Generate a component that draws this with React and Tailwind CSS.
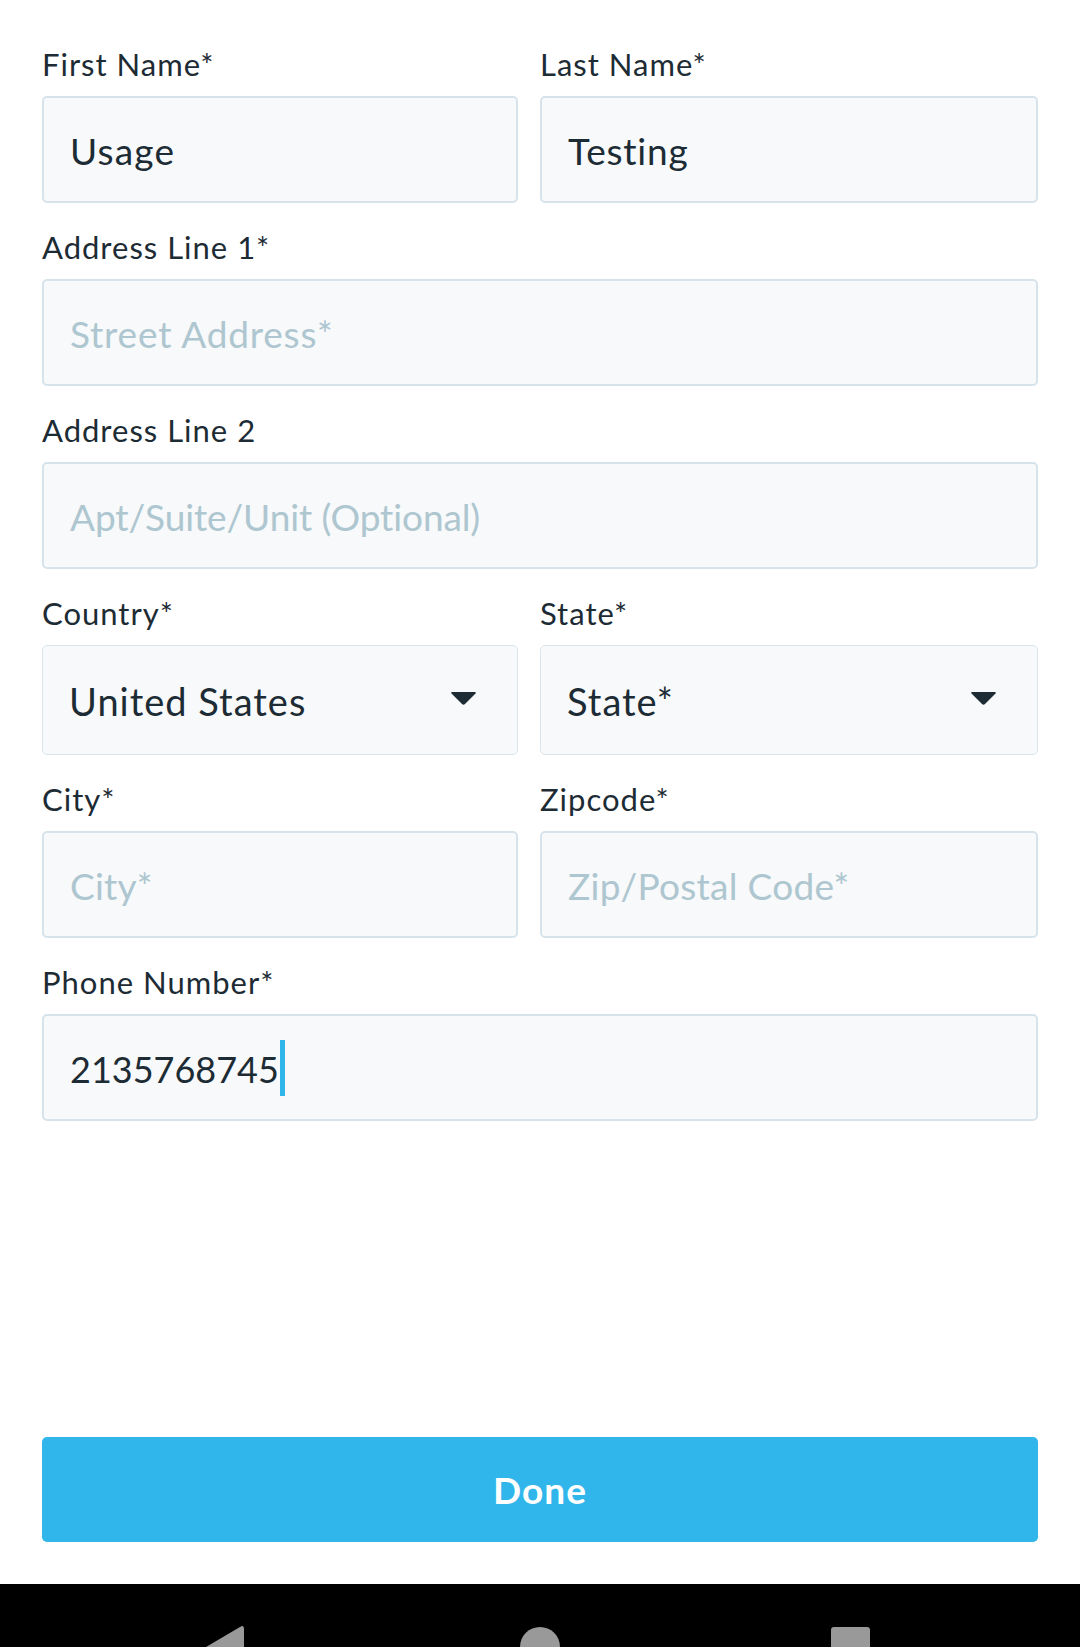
import React from "react";

const labelCls = "block text-[31px] leading-[36px] tracking-[1px] text-[#1d2b34] mb-[14px]";
const inputFont = { fontFamily: "Lato, sans-serif" };

function Field({ label, value, placeholder, cursor, className = "", textCls = "text-[37px] tracking-[0.8px]" }) {
  return (
    <div className={className}>
      <div className={labelCls} style={inputFont}>{label}</div>
      <div
        className={
          "flex items-center w-full h-[107px] rounded-[5px] border-2 border-[#d6e3eb] bg-[#f7f9fa] pl-[26px] pr-[26px] pt-[2px] text-[#1d2b34] " +
          textCls
        }
        style={inputFont}
      >
        {value ? (
          <span>{value}</span>
        ) : (
          <span className="text-[#aec6d0]">{placeholder}</span>
        )}
        {cursor && <span className="inline-block w-[5px] h-[56px] bg-[#30b6ea] ml-[1px] -mt-[2px]"></span>}
      </div>
    </div>
  );
}

function SelectField({ label, value, className = "" }) {
  return (
    <div className={className}>
      <div className={labelCls} style={inputFont}>{label}</div>
      <div
        className="flex items-center justify-between w-full h-[110px] rounded-[5px] border border-[#d9e5ec] bg-[#f7f9fa] pl-[26px] pr-[40px] text-[38px] tracking-[1px] text-[#1d2b34]"
        style={inputFont}
      >
        <span className="mt-[2px]">{value}</span>
        <svg width="27" height="16" viewBox="0 0 27 16" className="-mt-[4px]">
          <path d="M2 2 L25 2 Q26.5 2 25.5 3.5 L15 14 Q13.5 15.5 12 14 L1.5 3.5 Q0.5 2 2 2 Z" fill="#1d2b34" />
        </svg>
      </div>
    </div>
  );
}

export default function App() {
  return (
    <div className="w-[1080px] h-[1647px] flex flex-col bg-white overflow-hidden">
      <div className="flex-1 px-[42px] pt-[46px]">
        <div className="grid grid-cols-[476px_1fr] gap-x-[22px]">
          <Field label="First Name*" value="Usage" textCls="text-[37px] tracking-[1.2px]" />
          <Field label="Last Name*" value="Testing" />
        </div>
        <Field className="mt-[26px]" label="Address Line 1*" placeholder="Street Address*" />
        <Field
          className="mt-[26px]"
          label="Address Line 2"
          placeholder="Apt/Suite/Unit (Optional)"
          textCls="text-[37px] tracking-[-0.1px]"
        />
        <div className="grid grid-cols-[476px_1fr] gap-x-[22px] mt-[26px]">
          <SelectField label="Country*" value="United States" />
          <SelectField label="State*" value="State*" />
        </div>
        <div className="grid grid-cols-[476px_1fr] gap-x-[22px] mt-[26px]">
          <Field label="City*" placeholder="City*" textCls="text-[37px] tracking-[0.2px]" />
          <Field label="Zipcode*" placeholder="Zip/Postal Code*" textCls="text-[37px] tracking-[0.3px]" />
        </div>
        <Field
          className="mt-[26px]"
          label="Phone Number*"
          value="2135768745"
          cursor
          textCls="text-[36px] tracking-[0px]"
        />
      </div>
      <div className="px-[42px] mb-[42px]">
        <div
          className="h-[105px] rounded-[5px] bg-[#30b6ea] flex items-center justify-center text-white text-[37px] tracking-[1px] font-bold"
          style={inputFont}
        >
          Done
        </div>
      </div>
      <div className="h-[63px] bg-black relative overflow-hidden">
        <svg className="absolute left-[204px] top-[42px]" width="40" height="46" viewBox="0 0 40 46">
          <path d="M38 0 Q40 0 40 3 L40 43 Q40 46 37 44 L2 25 Q0 23 2 21 L36 1 Z" fill="#999999" />
        </svg>
        <div className="absolute left-[520px] top-[43px] w-[40px] h-[40px] rounded-full bg-[#999999]"></div>
        <div className="absolute left-[831px] top-[43px] w-[39px] h-[39px] rounded-[3px] bg-[#999999]"></div>
      </div>
    </div>
  );
}
